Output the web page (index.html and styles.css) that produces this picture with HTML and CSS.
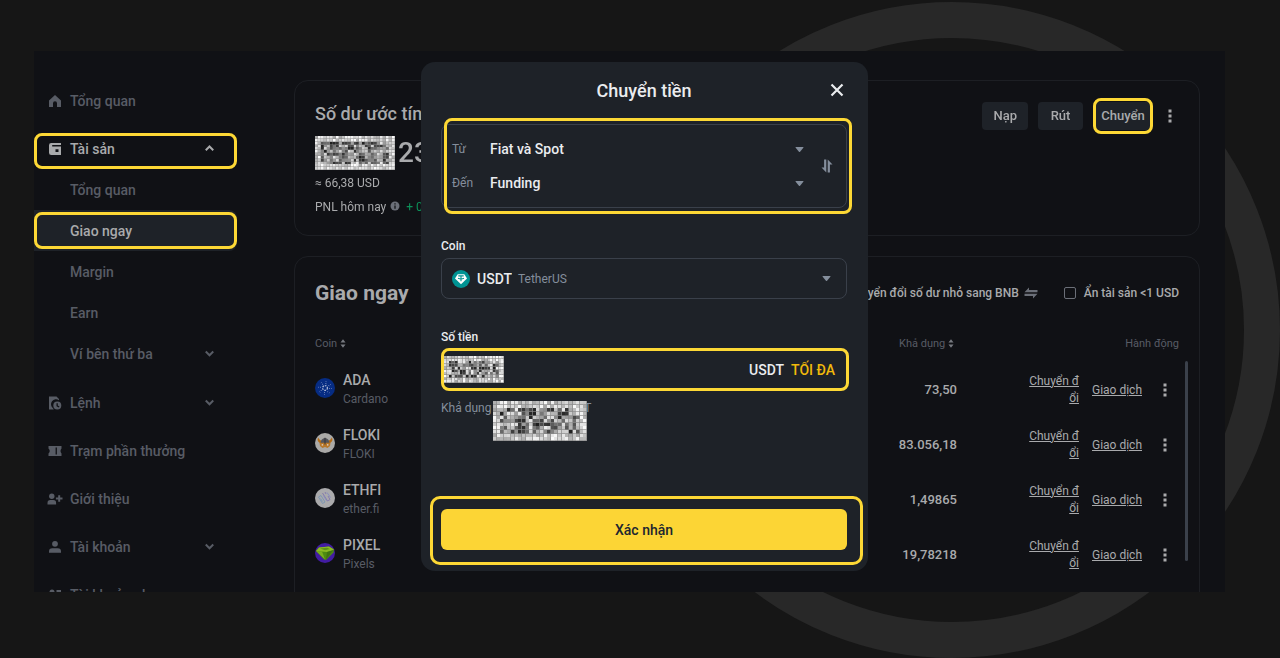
FILE: index.html
```html
<!DOCTYPE html>
<html lang="vi">
<head>
<meta charset="utf-8">
<title>Chuyển tiền</title>
<link rel="stylesheet" href="styles.css">
</head>
<body>
<svg width="0" height="0" class="defs" aria-hidden="true">
  <symbol id="down" viewBox="0 0 10 10"><path d="M1.600 3.200 5 6.600l3.400-3.400" fill="none" stroke="currentColor" stroke-width="1.800"/></symbol>
  <symbol id="up" viewBox="0 0 10 10"><path d="M1.600 6.600 5 3.200l3.400 3.400" fill="none" stroke="currentColor" stroke-width="1.800"/></symbol>
  <symbol id="caret" viewBox="0 0 8 6"><path d="M.8.800h6.400q.6 0 .2.600L4.500 4.900q-.5.600-1 0L.6 1.400Q.2.800.8.800z" fill="currentColor"/></symbol>
  <symbol id="sort" viewBox="0 0 6 10"><path d="M3 .3 5.800 4H.2zM3 9.700.2 6h5.600z" fill="currentColor"/></symbol>
  <symbol id="dots" viewBox="0 0 4 14"><path d="M.5.500h3v3h-3zM.5 5.500h3v3h-3zM.5 10.500h3v3h-3z" fill="currentColor"/></symbol>
</svg>
<div class="ring"></div>
<div class="app">
  <nav class="sidebar">
    <a class="item" href="#"><svg class="ico" viewBox="0 0 14 14"><path d="M7 1 13 6.600V13H9V9.200a2 2 0 0 0-4 0V13H1V6.600z" fill="currentColor"/></svg>Tổng quan</a>
    <a class="item open marked" href="#"><svg class="ico" viewBox="0 0 14 14"><path fill-rule="evenodd" d="M3.300 1H13v2H4.200v1.500H13V13H3.300A2.300 2.300 0 0 1 1 10.700V3.300A2.300 2.300 0 0 1 3.300 1zM7.500 7.200v2.800h3V7.200z" fill="currentColor"/></svg>Tài sản<svg class="chev" viewBox="0 0 10 10"><use href="#up"/></svg></a>
    <div class="sub">
      <a class="item" href="#">Tổng quan</a>
      <a class="item current marked" href="#">Giao ngay</a>
      <a class="item" href="#">Margin</a>
      <a class="item" href="#">Earn</a>
      <a class="item" href="#">Ví bên thứ ba<svg class="chev" viewBox="0 0 10 10"><use href="#down"/></svg></a>
    </div>
    <a class="item" href="#"><svg class="ico" viewBox="0 0 14 14"><path d="M1 .5h7.500L11 3v1.300A5 5 0 0 0 5 12.300l.8 1.200H1z" fill="currentColor"/><path fill-rule="evenodd" d="M9.300 5.500a4 4 0 1 1 0 8 4 4 0 0 1 0-8zM8.500 7.200v3l2.300 1.300.7-1.100-1.700-1V7.200z" fill="currentColor"/></svg>Lệnh<svg class="chev" viewBox="0 0 10 10"><use href="#down"/></svg></a>
    <a class="item" href="#"><svg class="ico" viewBox="0 0 14 14"><path fill-rule="evenodd" d="M.5 2h13v2.500q-2 2.500 0 5V12H.5V9.500q2.500-2.500 0-5zM7.600 3.600v6.800h1.300V3.600z" fill="currentColor"/></svg>Trạm phần thưởng</a>
    <a class="item" href="#"><svg class="ico wide" viewBox="0 0 16 14"><circle cx="4.800" cy="4.200" r="2.700" fill="currentColor"/><path d="M.5 12.500v-1.600A2.800 2.800 0 0 1 3.300 8.100h3a2.800 2.800 0 0 1 2.800 2.800v1.600zM11.200 3.200h2v2.300h2.300v2h-2.300v2.300h-2V7.500H8.900v-2h2.300z" fill="currentColor"/></svg>Giới thiệu</a>
    <a class="item" href="#"><svg class="ico" viewBox="0 0 14 14"><circle cx="7" cy="3.800" r="2.900" fill="currentColor"/><path d="M1 12.800v-1.300a3.300 3.300 0 0 1 3.300-3.300h5.400a3.300 3.300 0 0 1 3.300 3.300v1.300z" fill="currentColor"/></svg>Tài khoản<svg class="chev" viewBox="0 0 10 10"><use href="#down"/></svg></a>
    <a class="item" href="#"><svg class="ico" viewBox="0 0 14 14"><circle cx="4" cy="4" r="2.500" fill="currentColor"/><path d="M8.500 2H13v4H8.500zM0 13V8h8v5z" fill="currentColor"/></svg>Tài khoản phụ</a>
  </nav>

  <main class="main">
    <section class="card summary">
      <div>
        <h2>Số dư ước tính</h2>
        <div class="balance"><canvas class="mosaic" width="80" height="34" data-cols="27" data-rows="12"></canvas><span>23</span></div>
        <p>≈ 66,38 USD</p>
        <p class="pnl">PNL hôm nay <svg class="info" viewBox="0 0 10 10"><circle cx="5" cy="5" r="4.500" fill="currentColor"/><path d="M5 4.400v3.400M5 2.200v1.300" stroke="#101115" stroke-width="1.300"/></svg> <span class="gain">+ 0,02</span></p>
      </div>
      <div class="buttons">
        <button>Nạp</button>
        <button>Rút</button>
        <button class="transfer marked">Chuyển</button>
        <button class="more" aria-label="Thêm"><svg class="dots"><use href="#dots"/></svg></button>
      </div>
    </section>

    <section class="card assets">
      <header class="assets-head">
        <h1>Giao ngay</h1>
        <a class="convert-small" href="#">Chuyển đổi số dư nhỏ sang BNB<svg class="swap-h" viewBox="0 0 14 12"><path d="M.5 5.300 5 .5v2.600h8.500v2.200zM13.500 6.700 9 11.500V8.900H.5V6.700z" fill="currentColor"/></svg></a>
        <label class="hide"><input type="checkbox">Ẩn tài sản &lt;1 USD</label>
      </header>
      <table>
        <colgroup><col><col class="col-available"><col class="col-actions"></colgroup>
        <thead><tr><th>Coin <svg class="sort"><use href="#sort"/></svg></th><th class="right available">Khả dụng <svg class="sort"><use href="#sort"/></svg></th><th class="right">Hành động</th></tr></thead>
        <tbody>
          <tr>
            <td><div class="coin"><svg class="logo" viewBox="0 0 20 20"><circle cx="10" cy="10" r="10" fill="#062c83"/><g fill="none" stroke="#a9b5d5"><circle cx="10" cy="10" r="2.400" stroke-width="1.300" stroke-dasharray="1.600 .9"/><circle cx="10" cy="10" r="4.500" stroke-width=".9" stroke-dasharray=".9 2.630"/><circle cx="10" cy="10" r="6.500" stroke-width=".8" stroke-dasharray=".7 4.400"/></g></svg><div><b>ADA</b><span>Cardano</span></div></div></td>
            <td class="right amount">73,50</td>
            <td><div class="actions"><a class="swap" href="#">Chuyển đổi</a><a href="#">Giao dịch</a><button class="more" aria-label="Thêm"><svg class="dots"><use href="#dots"/></svg></button></div></td>
          </tr>
          <tr>
            <td><div class="coin"><svg class="logo" viewBox="0 0 20 20"><circle cx="10" cy="10" r="10" fill="#aaa9a7"/><path d="M3 4.500Q1.500 9 6 10.500L7.500 8Q4.500 7.500 3 4.500zM17 4.500q1.500 4.500-3 6L12.500 8Q15.500 7.500 17 4.500z" fill="#b36c16"/><path d="M5.500 10q.5-4.500 4.500-5 4 .5 4.500 5z" fill="#55555a"/><path d="M4.500 9.800h11L15 13l-2.500 2-2.500-1-2.500 1L5 13z" fill="#b87728"/><path d="M9.500 4.800h1v6.700h-1z" fill="#343439"/><path d="M6.700 11.200h1.400v1.400H6.700zM12 11.200h1.400v1.400H12z" fill="#ddd"/></svg><div><b>FLOKI</b><span>FLOKI</span></div></div></td>
            <td class="right amount">83.056,18</td>
            <td><div class="actions"><a class="swap" href="#">Chuyển đổi</a><a href="#">Giao dịch</a><button class="more" aria-label="Thêm"><svg class="dots"><use href="#dots"/></svg></button></div></td>
          </tr>
          <tr>
            <td><div class="coin"><svg class="logo" viewBox="0 0 20 20"><circle cx="10" cy="10" r="10" fill="#aaaaac"/><g fill="none" stroke-width=".9"><path d="m3.500 9 4 6.500 2.500-1.500-4-6.500zM5.500 10.500l2 3" stroke="#7894b3"/><path d="m7.500 5 5 8 2.500-1.500-2-3.500M10 4l1 2" stroke="#8176ad"/><path d="m12 4.500 3.500 5M8.500 7.500l3 5" stroke="#858ac1"/></g></svg><div><b>ETHFI</b><span>ether.fi</span></div></div></td>
            <td class="right amount">1,49865</td>
            <td><div class="actions"><a class="swap" href="#">Chuyển đổi</a><a href="#">Giao dịch</a><button class="more" aria-label="Thêm"><svg class="dots"><use href="#dots"/></svg></button></div></td>
          </tr>
          <tr>
            <td><div class="coin"><svg class="logo" viewBox="0 0 20 20"><circle cx="10" cy="10" r="10" fill="#421ca3"/><path d="M1 8 4 4.500l10-1L19 6.500l-.5 3L11 17l-2-.5z" fill="#4e8a12"/><path d="M1 8 4 4.500l10-1L19 6.500 12 9z" fill="#8cba24"/><path d="m1 8 6 .6 3 8z" fill="#79ae1f"/><path d="m12 9 6-1.500-7 9z" fill="#3f7411"/><path d="m5 5.500 7-.8 3 1.300-5 1.200z" fill="#5c9119"/></svg><div><b>PIXEL</b><span>Pixels</span></div></div></td>
            <td class="right amount">19,78218</td>
            <td><div class="actions"><a class="swap" href="#">Chuyển đổi</a><a href="#">Giao dịch</a><button class="more" aria-label="Thêm"><svg class="dots"><use href="#dots"/></svg></button></div></td>
          </tr>
        </tbody>
      </table>
      <div class="scrollbar"></div>
    </section>
  </main>

  <form class="modal" role="dialog" aria-labelledby="dialog-title">
    <header><h2 id="dialog-title">Chuyển tiền</h2><button type="button" class="close" aria-label="Đóng"><svg viewBox="0 0 14 14"><path d="m1.500 1.500 11 11m0-11-11 11" stroke="currentColor" stroke-width="2.200"/></svg></button></header>
    <div class="route marked">
      <div class="route-fields">
        <div class="route-row"><label for="from">Từ</label><select id="from"><option>Fiat và Spot</option></select><svg class="caret"><use href="#caret"/></svg></div>
        <div class="route-row"><label for="to">Đến</label><select id="to"><option>Funding</option></select><svg class="caret"><use href="#caret"/></svg></div>
      </div>
      <button type="button" class="flip" aria-label="Đổi chiều"><svg viewBox="0 0 12 14"><path d="M5.300.5v13L.5 8.500h2.600V.5zM6.700 13.500V.5l4.800 5H8.900v8z" fill="currentColor"/></svg></button>
    </div>
    <label class="title" for="coin">Coin</label>
    <div class="field">
      <svg class="tether" viewBox="0 0 18 18"><circle cx="9" cy="9" r="9" fill="#009393"/><path d="M5.700 4.300h6.600L15 8.500 9 14.200 3 8.500z" fill="#fff"/><path d="M6.300 5.900h5.400M9 6v5.300M6 8.300q3 1.300 6 0" fill="none" stroke="#009393" stroke-width="1.100"/></svg>
      <select id="coin"><option>USDT</option></select><span class="coin-name">TetherUS</span><svg class="caret"><use href="#caret"/></svg>
    </div>
    <label class="title" for="amount">Số tiền</label>
    <div class="field amount-field marked">
      <input id="amount" type="text">
      <canvas class="mosaic amount-cover" width="60" height="27" data-cols="22" data-rows="10"></canvas>
      <span class="unit">USDT</span><button type="button" class="max">TỐI ĐA</button>
    </div>
    <div class="hint"><span>Khả dụng</span><span class="hint-value">T<canvas class="mosaic" width="94" height="40" data-cols="26" data-rows="11"></canvas></span></div>
    <div class="confirm marked"><button type="submit">Xác nhận</button></div>
  </form>
</div>
<script src="mosaic.js"></script>
</body>
</html>
```
FILE: styles.css
```css
* { box-sizing: border-box; }
body {
  margin: 0;
  height: 100vh;
  padding: 51px 55px 66px 34px;
  background: #161616;
  color: #a9aaac;
  font-family: Roboto, "Noto Sans", sans-serif;
  font-size: 12px;
  line-height: 20px;
  overflow: hidden;
}
h1, h2, p { margin: 0; }
a { color: inherit; }
button, input, select { font: inherit; color: inherit; background: none; border: 0; padding: 0; margin: 0; }
.defs { position: absolute; }
.ring {
  position: absolute;
  left: 624px;
  top: 2px;
  width: 656px;
  height: 656px;
  border: 36px solid #282828;
  border-radius: 50%;
}
.app {
  position: relative;
  display: flex;
  height: 100%;
  overflow: hidden;
  background: #101115;
}
.marked { position: relative; }
.marked::after {
  content: "";
  position: absolute;
  inset: 0;
  border: 3px solid #fdd835;
  border-radius: 8px;
  pointer-events: none;
}

.sidebar { width: 203px; flex: none; padding-top: 29px; display: flex; flex-direction: column; gap: 7px; }
.sub { margin-top: -7px; padding-bottom: 1px; }
.item {
  display: flex;
  align-items: center;
  flex: none;
  height: 41px;
  padding: 0 22px 0 14px;
  color: #585c65;
  font-size: 14px;
  font-weight: 500;
  text-decoration: none;
}
.sub .item { padding-left: 36px; }
.item.open, .item.current { color: #a9aaac; }
.item.current { background: #1e2228; border-radius: 0 8px 8px 0; }
.item.open::after { inset: 5px 0 0; }
.item.current::after { inset: 2px 0; }
.ico { width: 14px; height: 14px; margin-right: 8px; }
.ico.wide { width: 16px; margin: 0 7px 0 -1px; }
.chev { width: 11px; height: 11px; margin-left: auto; }

.main { flex: 1; min-width: 0; padding: 29px 25px 0 57px; display: flex; flex-direction: column; gap: 20px; }
.card { flex: none; border: 1px solid #1d1f24; border-radius: 14px; padding: 21px 20px 18px; }
.summary { display: flex; justify-content: space-between; align-items: flex-start; }
.summary h2 { font-size: 18px; line-height: 24px; font-weight: 500; }
.balance { display: flex; align-items: center; gap: 3px; height: 34px; margin: 10px 0 3px; font-size: 28px; font-weight: 500; }
.pnl { margin-top: 4px; }
.info { width: 10px; height: 10px; margin: 0 3px 0 1px; color: #6b6f78; }
.gain { color: #0c9159; }
.mosaic { display: block; }
.buttons { display: flex; gap: 10px; align-items: center; }
.buttons button { height: 28px; padding: 0 11px; border-radius: 4px; background: #1e2228; font-size: 13px; font-weight: 500; min-width: 45px; }
.buttons .transfer { padding: 0; width: 60px; }
.transfer::after { inset: -4px 0; }
.buttons .more { min-width: 0; width: 18px; padding: 0; margin-left: -2px; background: none; }
.more { display: flex; align-items: center; justify-content: center; height: 28px; }
.dots { width: 4px; height: 14px; }

.assets { position: relative; height: 400px; padding-top: 20px; }
.assets-head { display: flex; align-items: center; justify-content: flex-end; height: 32px; font-weight: 500; }
.assets-head h1 { margin-right: auto; font-size: 21px; line-height: 32px; }
.convert-small { text-decoration: none; display: flex; align-items: center; gap: 5px; margin-right: 26px; }
.swap-h { width: 14px; height: 12px; color: #6b6f78; }
.hide { display: flex; align-items: center; gap: 8px; }
.hide input { appearance: none; width: 12px; height: 12px; border: 1px solid #6b6f78; border-radius: 2px; }
table { width: 100%; margin-top: 25px; border-collapse: collapse; table-layout: fixed; }
.col-available { width: 200px; }
.col-actions { width: 222px; }
th, td { padding: 0; text-align: left; }
th { height: 28px; vertical-align: top; color: #585c65; font-size: 11px; font-weight: 400; }
td { height: 55px; }
th.right, td.right { text-align: right; }
th.available { padding-right: 3px; }
.sort { width: 6px; height: 9px; color: #777a80; vertical-align: -1px; }
.coin { display: flex; align-items: center; gap: 8px; }
.coin b, .coin span { display: block; line-height: 19px; }
.coin b { font-size: 14px; font-weight: 500; }
.coin span { color: #585c65; }
.logo { width: 20px; height: 20px; margin-bottom: 4px; }
.amount { font-size: 13px; font-weight: 500; }
.actions { display: flex; align-items: center; justify-content: flex-end; padding-right: 8px; }
.swap { width: 52px; margin-right: 13px; line-height: 17px; text-align: right; word-break: break-all; }
.actions .more { width: 12px; margin-left: 17px; }
.scrollbar { position: absolute; right: 11px; top: 104px; width: 3px; height: 200px; border-radius: 2px; background: #3b414b; }

.modal {
  position: absolute;
  left: 387px;
  top: 11px;
  width: 447px;
  padding: 18px 21px 21px 20px;
  border-radius: 14px;
  background: #1e2228;
  color: #eaecef;
}
.modal header { position: relative; text-align: center; }
.modal h2 { font-size: 18px; line-height: 22px; font-weight: 500; }
.close { position: absolute; right: 3px; top: 3px; width: 14px; height: 14px; }
.close svg, .flip svg { display: block; width: 100%; height: 100%; }
.route, .field { display: flex; align-items: center; border: 1px solid #3a404a; border-radius: 8px; }
.route { height: 84px; margin: 22px 0 28px; padding: 0 13px 0 10px; }
.route::after { inset: -7px -6px -7px 2px; }
.route-fields { flex: 1; }
.route-row { display: flex; align-items: center; height: 34px; padding-right: 17px; }
.route-row label { width: 38px; color: #848e9c; }
select { appearance: none; outline: 0; font-size: 14px; font-weight: 500; }
.route-row select { flex: 1; }
.caret { flex: none; width: 9px; height: 7px; color: #848e9c; margin-left: auto; }
.flip { width: 12px; height: 14px; color: #848e9c; }
.title { display: block; font-weight: 500; }
.field { height: 41px; margin: 2px 0 28px; padding: 0 15px 0 10px; font-size: 14px; font-weight: 500; }
.tether { width: 18px; height: 18px; margin-right: 7px; }
.coin-name { margin-left: 6px; color: #848e9c; font-size: 12px; font-weight: 400; }
.amount-field { margin-bottom: 8px; padding-right: 11px; }
.amount-field::after { inset: -2px -3px -2px -1px; }
.amount-field input { flex: 1; min-width: 0; outline: 0; }
.amount-cover { position: absolute; left: 2px; top: 6px; }
.max { margin-left: 7px; color: #f0b90b; font-weight: 500; }
.hint { display: flex; height: 20px; color: #848e9c; }
.hint-value { position: relative; width: 100px; text-align: right; }
.hint-value .mosaic { position: absolute; right: 4px; top: 3px; }
.confirm { margin-top: 91px; }
.confirm::after { inset: -13px -16px -15px -11px; border-radius: 10px; }
.confirm button { display: block; width: 100%; height: 41px; border-radius: 6px; background: #fcd535; color: #202630; font-size: 14px; font-weight: 500; }
```
FILE: mosaic.js
```js
// Paints the privacy mosaic that hides balances.
document.querySelectorAll(".mosaic").forEach((canvas, n) => {
  const ctx = canvas.getContext("2d");
  const cols = +canvas.dataset.cols, rows = +canvas.dataset.rows;
  const w = canvas.width / cols, h = canvas.height / rows;
  let seed = 7100 + n * 3791;
  const random = () => (seed = (seed * 16807) % 2147483647) / 2147483647;
  ctx.fillStyle = "#888";
  ctx.fillRect(0, 0, canvas.width, canvas.height);
  for (let y = 0; y < rows; y++) {
    for (let x = 0; x < cols; x++) {
      const edge = x < 2 || y < 2 || x > cols - 3 || y > rows - 3;
      const v = Math.round(edge ? 165 + random() * 90 : 30 + random() * 210);
      ctx.fillStyle = `rgb(${v},${v},${v})`;
      ctx.fillRect(Math.round(x * w), Math.round(y * h), w - 0.3, h - 0.3);
    }
  }
});
```
